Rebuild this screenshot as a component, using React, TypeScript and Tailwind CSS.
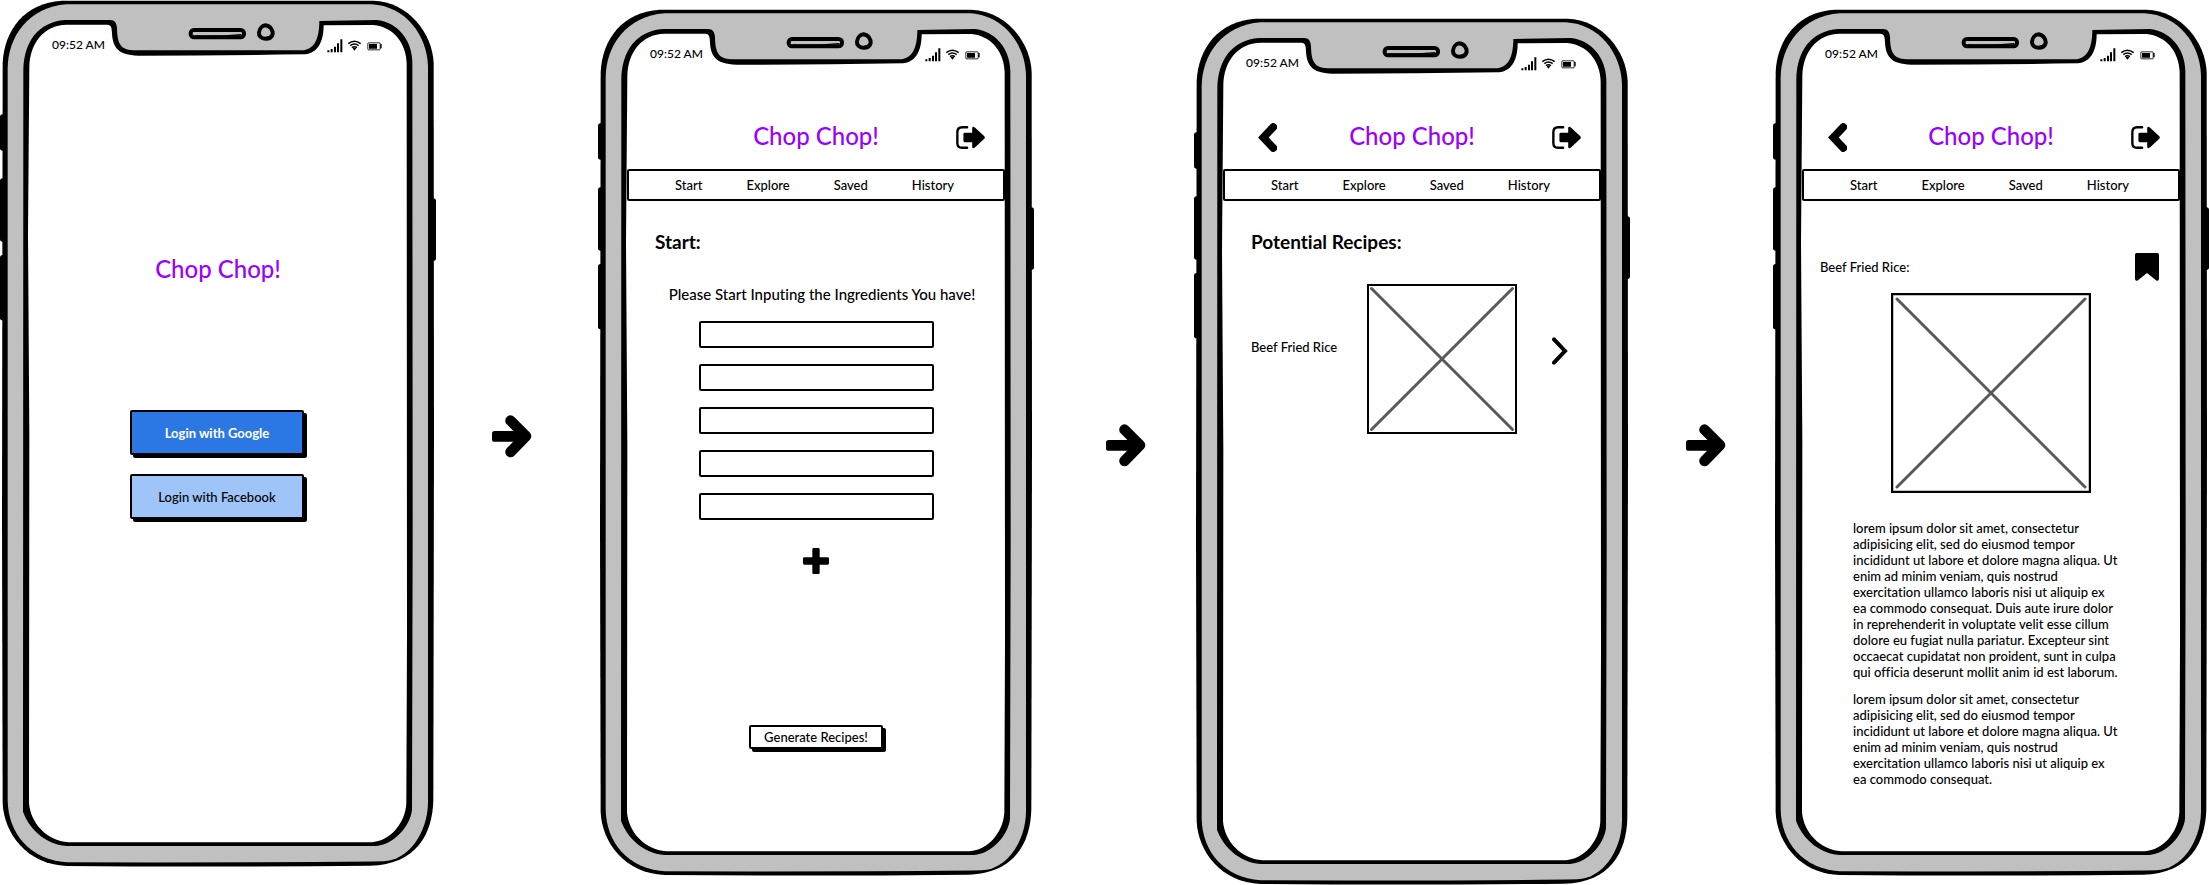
import type { ReactNode } from "react";

const PARAGRAPH_START = `lorem ipsum dolor sit amet, consectetur
adipisicing elit, sed do eiusmod tempor
incididunt ut labore et dolore magna aliqua. Ut
enim ad minim veniam, quis nostrud
exercitation ullamco laboris nisi ut aliquip ex
ea commodo consequat.`;

const PARAGRAPH_END = ` Duis aute irure dolor
in reprehenderit in voluptate velit esse cillum
dolore eu fugiat nulla pariatur. Excepteur sint
occaecat cupidatat non proident, sunt in culpa
qui officia deserunt mollit anim id est laborum.`;

function DeviceFrame() {
  return (
    <svg
      className="absolute inset-0 -z-10 h-full w-full"
      viewBox="0 0 1308 2604"
      preserveAspectRatio="none"
      aria-hidden="true"
    >
      <rect x="0" y="343" width="20" height="109" rx="8" />
      <rect x="0" y="535" width="20" height="190" rx="8" />
      <rect x="0" y="765" width="20" height="196" rx="8" />
      <rect x="1284" y="595" width="24" height="188" rx="8" />
      <path d="M8 190C12 90 75 8 185 2L1120 2C1225 5 1298 100 1301 190L1302 1300L1300 2400C1298 2500 1250 2594 1110 2597Q640 2602 200 2598C80 2594 12 2500 8 2410L6 1560Z" />
      <path
        fill="#c0c0c0"
        d="M23 205C24 110 85 22 200 13L1115 13C1215 18 1282 105 1284 200L1284 2410C1282 2500 1225 2582 1150 2584Q900 2588 200 2587C90 2580 24 2500 23 2400Z"
      />
      <path d="M70 210C72 125 115 66 195 60L330 60C345 60 350 70 351 85C352 125 358 150 400 151L905 151C942 150 958 118 958 63L1130 60C1192 66 1236 120 1237 185L1238 1600L1236 2430C1230 2480 1180 2535 1128 2538L200 2538C130 2532 85 2480 69 2435Z" />
      <path
        fill="#fff"
        d="M88 200C90 130 130 76 200 74L322 74C335 74 335 85 336 100C338 140 352 166 415 167Q660 167 915 163C950 160 971 130 971 76L1120 75C1180 80 1219 130 1220 190L1221 1900L1219 2410C1216 2470 1170 2524 1115 2527L205 2527C140 2522 92 2470 87 2410L88 1300L84 700Z"
      />
      <rect x="572" y="90" width="160" height="22" rx="10" fill="none" stroke="#000" strokeWidth="12" />
      <path d="M585 108Q660 110 724 104" fill="none" stroke="#000" strokeWidth="4" />
      <path
        d="M796 76C812 78 819 92 818 102C816 112 806 116 796 116C784 116 776 108 777 98C778 88 785 77 796 76Z"
        fill="none"
        stroke="#000"
        strokeWidth="12"
      />
    </svg>
  );
}

function StatusBar() {
  return (
    <div className="flex h-[18px] items-center pr-[25px] pl-[23px] text-xs leading-[18px]">
      <time className="flex-1">09:52 AM</time>
      <svg className="h-[15px] w-[55px]" viewBox="980 107 165 45" aria-hidden="true">
        <path d="M981 144h6v6h-6zM991 140h6v10h-6zM1001 133h6v17h-6zM1010 123h6v27h-6zM1020 111h6v39h-6z" />
        <path
          d="M1044 124Q1062 109 1081 124M1050 130Q1062 120 1075 130M1055 136Q1062 130 1070 136"
          fill="none"
          stroke="#000"
          strokeWidth="4.5"
        />
        <path d="M1057 138Q1062 135 1068 138L1062 145Z" />
        <rect x="1102.5" y="121.500" width="37" height="21" rx="2" fill="none" stroke="#000" strokeWidth="2.5" />
        <path d="M1106 125h24v14h-24zM1140 125h4v13h-4z" />
      </svg>
    </div>
  );
}

function Phone({ className, label, children }: { className: string; label: string; children: ReactNode }) {
  return (
    <section
      aria-label={label}
      className={"relative isolate flex min-h-[868px] min-w-0 flex-col px-[29px] pt-9 " + className}
    >
      <DeviceFrame />
      <StatusBar />
      {children}
    </section>
  );
}

function FlowArrow({ className }: { className: string }) {
  return (
    <div className={className}>
      <svg className="h-[43px] w-10" viewBox="20 30 121 128" aria-hidden="true">
        <path d="M76 46L123 93L76 141" fill="none" stroke="#000" strokeWidth="32" strokeLinecap="round" strokeLinejoin="round" />
        <rect x="20" y="77" width="100" height="33" rx="8" />
      </svg>
    </div>
  );
}

function BackIcon() {
  return (
    <svg className="h-[29px] w-[19px]" viewBox="204 365 57 87" aria-hidden="true">
      <path d="M250 377L220 408.500L250 440" fill="none" stroke="#000" strokeWidth="23" strokeLinecap="round" />
    </svg>
  );
}

function LogoutIcon() {
  return (
    <svg className="h-[23px] w-[29px]" viewBox="1100 378 86 68" aria-hidden="true">
      <path
        d="M1133 381.500H1118Q1104 382 1104 396V428Q1104 442 1118 442.500H1133"
        fill="none"
        stroke="#000"
        strokeWidth="7"
        strokeLinecap="round"
      />
      <path d="M1126 398H1148V384Q1149 377 1156 382L1184 408Q1187 412 1184 416L1156 442Q1149 447 1148 440V426H1126Q1122 426 1122 422V402Q1122 398 1126 398Z" />
    </svg>
  );
}

function AppHeader({ className, back }: { className: string; back?: string }) {
  return (
    <header>
      <div className={"grid h-[30px] grid-cols-[1fr_auto_1fr] items-center px-5 " + className}>
        <div className={"flex " + (back ?? "")}>
          {back && (
            <button type="button" aria-label="Back">
              <BackIcon />
            </button>
          )}
        </div>
        <h1 className="pb-0.5 text-2xl leading-7 font-medium text-[#9900ff]">Chop Chop!</h1>
        <button type="button" aria-label="Log out" className="justify-self-end">
          <LogoutIcon />
        </button>
      </div>
      <nav className="mt-[17px] flex h-8 items-center gap-11 rounded-[2px] border-2 border-black bg-white pl-[46px]">
        <a href="#start">Start</a>
        <a href="#explore">Explore</a>
        <a href="#saved">Saved</a>
        <a href="#history">History</a>
      </nav>
    </header>
  );
}

function Picture({ className }: { className: string }) {
  return (
    <svg className={className} viewBox="0 0 200 200" role="img" aria-label="Beef Fried Rice">
      <rect x="1" y="1" width="198" height="198" fill="#fff" stroke="#000" strokeWidth="2.5" vectorEffect="non-scaling-stroke" />
      <path
        d="M6 6L194 194M194 6L6 194"
        fill="none"
        stroke="#595959"
        strokeWidth="3"
        strokeLinecap="round"
        vectorEffect="non-scaling-stroke"
      />
    </svg>
  );
}

export default function App() {
  return (
    <main className="grid grid-cols-[436fr_162fr_436fr_160fr_436fr_143fr_436fr] items-start bg-white font-['Lato','Open_Sans',sans-serif] text-[13px] leading-4 font-medium text-black [font-variant-ligatures:none]">
      <Phone label="Login" className="">
        <h1 className="mt-[200px] text-center text-2xl leading-[30px] font-medium text-[#9900ff]">Chop Chop!</h1>
        <div className="mt-[126px] flex flex-col items-center gap-[19px] pr-0.5">
          <button
            type="button"
            className="h-[45px] w-[174px] rounded-[2px] border-2 border-black bg-[#2b78e4] font-bold text-white shadow-[3px_3px_0_#000]"
          >
            Login with Google
          </button>
          <button
            type="button"
            className="h-[45px] w-[174px] rounded-[2px] border-2 border-black bg-[#9fc5f8] shadow-[3px_3px_0_#000]"
          >
            Login with Facebook
          </button>
        </div>
      </Phone>

      <FlowArrow className="mt-[415px] pl-14" />

      <Phone label="Start" className="mt-[9px]">
        <AppHeader className="mt-[59px]" />
        <h2 className="mt-[29px] pl-7 text-[19px] leading-6 font-bold">Start:</h2>
        <p className="mt-[30px] pl-3 text-center text-[15px] leading-5">Please Start Inputing the Ingredients You have!</p>
        <form className="mt-[17px] flex flex-col items-center">
          <div className="flex flex-col gap-4">
            {[1, 2, 3, 4, 5].map((n) => (
              <input
                key={n}
                type="text"
                aria-label={`Ingredient ${n}`}
                className="h-[27px] w-[235px] rounded-[2px] border-2 border-black bg-white px-2"
              />
            ))}
          </div>
          <button type="button" aria-label="Add ingredient" className="mt-7">
            <svg className="h-[26px] w-[26px]" viewBox="0 0 78 78" aria-hidden="true">
              <path d="M32 0h14q4 0 4 4v24h24q4 0 4 4v14q0 4-4 4H50v24q0 4-4 4H32q-4 0-4-4V50H4q-4 0-4-4V32q0-4 4-4h24V4q0-4 4-4Z" />
            </svg>
          </button>
          <button
            type="button"
            className="mt-[151px] h-6 w-[134px] rounded-[2px] border-2 border-black bg-white shadow-[3px_3px_0_#000]"
          >
            Generate Recipes!
          </button>
        </form>
      </Phone>

      <FlowArrow className="mt-[424px] pl-[72px]" />

      <Phone label="Potential recipes" className="mt-[18px]">
        <AppHeader className="mt-[50px]" back="pl-[15px]" />
        <h2 className="mt-[29px] pl-7 text-[19px] leading-6 font-bold">Potential Recipes:</h2>
        <div className="mt-[30px] flex items-start pr-[33px] pl-7">
          <p className="flex-1 pt-[55px]">Beef Fried Rice</p>
          <Picture className="size-[150px]" />
          <button type="button" aria-label="Open recipe" className="mt-[53px] ml-[35px]">
            <svg className="h-7 w-4" viewBox="1086 1010 48 82" aria-hidden="true">
              <path d="M1092 1016L1125 1051L1092 1086" fill="none" stroke="#000" strokeWidth="12" strokeLinecap="round" />
            </svg>
          </button>
        </div>
      </Phone>

      <FlowArrow className="mt-[424px] pl-14" />

      <Phone label="Recipe" className="mt-[9px]">
        <AppHeader className="mt-[59px]" back="pl-[6px]" />
        <div className="mt-[52px] flex h-7 items-center justify-between pr-[21px] pl-[18px]">
          <h2>Beef Fried Rice:</h2>
          <button type="button" aria-label="Save recipe">
            <svg className="h-7 w-6" viewBox="0 0 72 84" aria-hidden="true">
              <path d="M5 0H67Q72 0 72 5V78Q71 85 65 83L36 60L7 83Q1 85 0 78V5Q0 0 5 0Z" />
            </svg>
          </button>
        </div>
        <Picture className="mt-3 size-[200px] self-center" />
        <div className="mt-[27px] flex flex-col gap-[11px] pl-[51px] whitespace-pre-line">
          <p>{PARAGRAPH_START + PARAGRAPH_END}</p>
          <p>{PARAGRAPH_START}</p>
        </div>
      </Phone>
    </main>
  );
}
